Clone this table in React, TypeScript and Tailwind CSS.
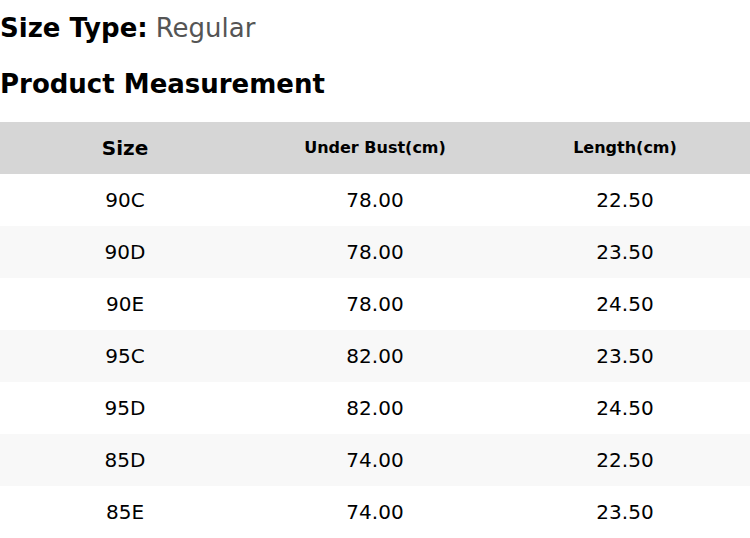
const rows = [
  ['90C', '78.00', '22.50'],
  ['90D', '78.00', '23.50'],
  ['90E', '78.00', '24.50'],
  ['95C', '82.00', '23.50'],
  ['95D', '82.00', '24.50'],
  ['85D', '74.00', '22.50'],
  ['85E', '74.00', '23.50'],
];

export default function App() {
  return (
    <div className="w-[750px] bg-white text-black" style={{ fontFamily: '"DejaVu Sans", sans-serif' }}>
      <div className="h-[56px] flex items-center text-[26px]">
        <span className="font-bold">Size Type:</span>
        <span className="ml-[8px] text-[#555555]">Regular</span>
      </div>
      <div className="h-[57px] flex items-center text-[26px] font-bold">Product Measurement</div>
      <div className="mt-[9px]">
        <div className="grid grid-cols-3 h-[52px] bg-[#d6d6d6] items-center text-center font-bold">
          <div className="text-[20px]">Size</div>
          <div className="text-[16px]">Under Bust(cm)</div>
          <div className="text-[16px]">Length(cm)</div>
        </div>
        {rows.map((r, i) => (
          <div
            key={i}
            className={`grid grid-cols-3 h-[52px] items-center text-center text-[20px] ${i % 2 === 1 ? 'bg-[#f8f8f8]' : 'bg-white'}`}
          >
            {r.map((c, j) => (
              <div key={j}>{c}</div>
            ))}
          </div>
        ))}
      </div>
    </div>
  );
}
